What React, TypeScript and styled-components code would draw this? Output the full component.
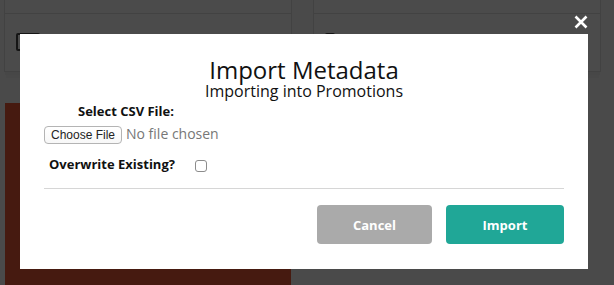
import styled, { createGlobalStyle } from "styled-components";

const GlobalStyle = createGlobalStyle`
  html, body {
    margin: 0;
    padding: 0;
    background: #4a4a4a;
    font-family: "Open Sans", "Liberation Sans", sans-serif;
  }
  * { box-sizing: border-box; }
`;

const Page = styled.div`
  position: relative;
  width: 614px;
  height: 285px;
  overflow: hidden;
  background: #4a4a4a;
  padding-left: 4px;
`;

const CardRow = styled.div`
  display: grid;
  grid-template-columns: 288px 288px;
  gap: 21px;
  margin-top: -20px;
`;

const Card = styled.div`
  height: 92px;
  background: #4b4b4b;
  border: 1px solid #424242;
  box-shadow: 0 4px 0 -1px #474747, 0 8px 0 -2px #484848;
  display: flex;
  flex-direction: column;
`;

const CardHeader = styled.div`
  height: 33px;
  border-bottom: 1px solid #424242;
`;

const CardBody = styled.div<{ $indent: number }>`
  padding: 19px 0 0 ${(p) => p.$indent}px;
`;

const DarkBox = styled.div<{ $filled?: boolean }>`
  width: ${(p) => (p.$filled ? 10 : 24)}px;
  height: 18px;
  border: 2px solid #151515;
  border-radius: 2px;
  background: ${(p) => (p.$filled ? "#151515" : "transparent")};
`;

const RedPanel = styled.div`
  margin: 31px 0 0 1px;
  width: 286px;
  height: 200px;
  background: #461a10;
`;

const Close = styled.button`
  position: absolute;
  left: 573px;
  top: 14px;
  width: 16px;
  height: 16px;
  padding: 0;
  border: 0;
  background: transparent;
  display: flex;
  align-items: center;
  justify-content: center;
  cursor: pointer;
`;

const Modal = styled.div`
  position: absolute;
  left: 20px;
  top: 34px;
  width: 568px;
  height: 235px;
  background: #ffffff;
  padding: 24px 24px 24px;
  display: flex;
  flex-direction: column;
  color: #111;
`;

const Title = styled.h1`
  margin: 0;
  font-size: 24px;
  line-height: 24px;
  font-weight: 400;
  text-align: center;
  color: #111;
`;

const Subtitle = styled.h2`
  margin: 0;
  font-size: 16px;
  line-height: 18px;
  font-weight: 400;
  text-align: center;
  color: #111;
`;

const Label = styled.label<{ $indent?: number }>`
  display: block;
  font-size: 13px;
  line-height: 16px;
  font-weight: 700;
  color: #111;
  padding-left: ${(p) => p.$indent ?? 0}px;
`;

const FieldLabel = styled(Label)`
  margin-top: 3px;
`;

const FileRow = styled.div`
  display: flex;
  align-items: center;
  gap: 4px;
  margin-top: 7px;
`;

const ChooseButton = styled.button`
  height: 18px;
  width: 78px;
  padding: 0;
  border: 1px solid #b4b4b4;
  border-radius: 4px;
  background: linear-gradient(#ffffff, #f7f7f7);
  font-family: "Liberation Sans", Arial, sans-serif;
  font-size: 12px;
  color: #222;
  cursor: pointer;
`;

const FileName = styled.span`
  font-size: 14px;
  line-height: 18px;
  color: #777777;
  margin-top: -3px;
`;

const CheckRow = styled.div`
  display: flex;
  align-items: center;
  gap: 20px;
  margin-top: 12px;
  padding-left: 5px;
`;

const Check = styled.span`
  width: 12px;
  height: 12px;
  border: 1px solid #8c8c8c;
  border-radius: 3px;
  background: #fff;
  margin-top: 3px;
`;

const Divider = styled.hr`
  margin: 16px 0 0;
  border: 0;
  border-top: 1px solid #d6d6d6;
  height: 0;
`;

const Actions = styled.div`
  display: flex;
  justify-content: flex-end;
  gap: 14px;
  margin-top: 16px;
`;

const ActionButton = styled.button<{ $primary?: boolean; $width: number }>`
  width: ${(p) => p.$width}px;
  height: 39px;
  border: 0;
  border-radius: 4px;
  background: ${(p) => (p.$primary ? "#20a797" : "#aaaaaa")};
  color: #ffffff;
  font-family: "Open Sans", "Liberation Sans", sans-serif;
  font-size: 13px;
  font-weight: 700;
  cursor: pointer;
`;

export default function App() {
  return (
    <>
      <GlobalStyle />
      <Page>
        <CardRow>
          <Card>
            <CardHeader />
            <CardBody $indent={11}>
              <DarkBox />
            </CardBody>
          </Card>
          <Card>
            <CardHeader />
            <CardBody $indent={11}>
              <DarkBox $filled />
            </CardBody>
          </Card>
        </CardRow>
        <RedPanel />

        <Close aria-label="Close">
          <svg width="14" height="14" viewBox="0 0 14 14">
            <path d="M1.5 1.5 L12.5 12.5 M12.5 1.5 L1.5 12.5" stroke="#ffffff" strokeWidth="2.6" strokeLinecap="butt" />
          </svg>
        </Close>

        <Modal role="dialog">
          <Title>Import Metadata</Title>
          <Subtitle>Importing into Promotions</Subtitle>
          <FieldLabel $indent={34}>Select CSV File:</FieldLabel>
          <FileRow>
            <ChooseButton>Choose File</ChooseButton>
            <FileName>No file chosen</FileName>
          </FileRow>
          <CheckRow>
            <Label>Overwrite Existing?</Label>
            <Check />
          </CheckRow>
          <Divider />
          <Actions>
            <ActionButton $width={115}>Cancel</ActionButton>
            <ActionButton $primary $width={118}>Import</ActionButton>
          </Actions>
        </Modal>
      </Page>
    </>
  );
}
